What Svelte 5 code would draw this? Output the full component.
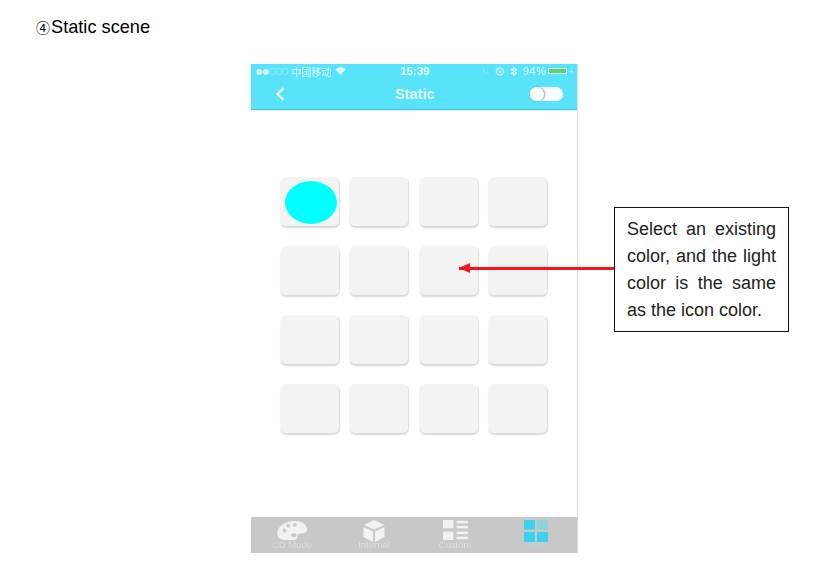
<script>
  const tiles = Array.from({ length: 16 }, (_, i) => i);
</script>

<main class="page">
  <h1 class="title"><span class="num">④</span>Static scene</h1>

  <div class="stage">
    <section class="phone">
      <header class="top">
        <div class="status">
          <span class="carrier"><span class="dots">●●○○○</span> 中国移动
            <svg width="11" height="8" viewBox="0 0 10 8"><path d="M0 2.6C3 -.6 7 -.6 10 2.6L5 8Z" fill="#dff8fd" /></svg>
          </span>
          <span class="time">15:39</span>
          <span class="right">
            <svg width="40" height="9" viewBox="0 0 36 8">
              <path d="M2 1C2 4 4 6 7 6" stroke="#8fe4f5" stroke-width="1.2" fill="none" />
              <circle cx="17" cy="4" r="3.2" fill="none" stroke="#cdf4fb" stroke-width="1.2" />
              <circle cx="17" cy="4" r="1.2" fill="#cdf4fb" />
              <path d="M29 0.5L32 2.5L27 6M29 7.500L32 5.500L27 2M29 .5V7.500" stroke="#e8fbff" stroke-width="1" fill="none" />
            </svg>
            <span class="pct">94%</span>
            <span class="battery"></span>
            <span class="plug">+</span>
          </span>
        </div>
        <div class="nav">
          <svg class="back" width="12" height="16" viewBox="0 0 12 16"><path d="M9.5 2L3.5 8L9.5 14" stroke="#f1fcff" stroke-width="2.4" fill="none" /></svg>
          <span class="heading">Static</span>
          <span class="toggle"><span class="knob"></span></span>
        </div>
      </header>

      <div class="grid">
        {#each tiles as t}
          <div class="tile">
            {#if t === 0}<span class="dot"></span>{/if}
          </div>
        {/each}
      </div>

      <footer class="tabs">
        <div class="tab">
          <svg width="32" height="23" viewBox="0 0 34 22">
            <path d="M2 17C-1 9 8 1 20 1C29 1 33 6 33 10C33 15 27 13 24 15C21 17 25 21 18 21C11 21 4 22 2 17Z" fill="#f2f2f2" />
            <circle cx="9" cy="11" r="2" fill="#c8c8c8" /><circle cx="13" cy="6" r="2" fill="#c8c8c8" />
            <circle cx="20" cy="5" r="2" fill="#c8c8c8" /><ellipse cx="19" cy="16" rx="3" ry="2" fill="#c8c8c8" />
          </svg>
          <span>CD Mode</span>
        </div>
        <div class="tab">
          <svg width="24" height="24" viewBox="0 0 24 24">
            <path d="M12 1L22 6L12 10.500L2 6Z" fill="#f2f2f2" />
            <path d="M1.500 8L11 12.500V23L1.500 18Z" fill="#f2f2f2" />
            <path d="M22.500 8L13 12.500V23L22.500 18Z" fill="#f2f2f2" />
          </svg>
          <span>Internal</span>
        </div>
        <div class="tab low">
          <svg width="25" height="20" viewBox="0 0 24 24" preserveAspectRatio="none" fill="#f2f2f2">
            <rect x="0" y="0" width="10" height="10" /><rect x="13" y="1" width="11" height="3" /><rect x="13" y="7" width="11" height="3" />
            <rect x="0" y="14" width="10" height="10" /><rect x="13" y="14" width="11" height="3" /><rect x="13" y="20" width="11" height="3" />
          </svg>
          <span>Custom</span>
        </div>
        <div class="tab low active">
          <svg width="24" height="22" viewBox="0 0 24 24" preserveAspectRatio="none">
            <rect x="0" y="0" width="11" height="10.500" fill="#3ad2f0" /><rect x="13" y="0" width="11" height="10.500" fill="#8fd0dd" />
            <rect x="0" y="13" width="11" height="11" fill="#3ad2f0" /><rect x="13" y="13" width="11" height="11" fill="#3ad2f0" />
          </svg>
          <span>Static</span>
        </div>
      </footer>
    </section>

    <!-- annotation on top of the screenshot -->
    <div class="arrow"></div>
    <aside class="callout">
      <p class="just">Select an existing</p>
      <p class="just">color, and the light</p>
      <p class="just">color is the same</p>
      <p>as the icon color.</p>
    </aside>
  </div>
</main>

<style>
  :global(body) {
    margin: 0;
    background: #fff;
  }

  .page {
    width: 833px;
    height: 569px;
    overflow: hidden;
    font-family: "Liberation Sans", Arial, sans-serif;
    color: #111;
  }

  .title {
    margin: 0;
    padding: 18px 0 0 36px;
    height: 27px;
    font-size: 18.2px;
    line-height: 19px;
    font-weight: normal;
    color: #000;
  }

  .num {
    font-family: "Noto Sans CJK SC", "DejaVu Sans", sans-serif;
    font-size: 14px;
    display: inline-block;
    width: 15px;
  }

  .stage {
    position: relative;
    padding: 19px 0 0 251px;
  }

  .phone {
    width: 326px;
    height: 489px;
    border-right: 1px solid #dcdcdc;
    display: flex;
    flex-direction: column;
    background: #fff;
    filter: blur(0.5px);
  }

  .top {
    height: 45px;
    background: #58e3fb;
    border-bottom: 1px solid #45bfd4;
    box-shadow: 0 1px 2px #d8eef2;
    color: #eefcff;
    flex: none;
  }

  .status {
    height: 14px;
    padding: 0 3px 0 5px;
    display: flex;
    align-items: center;
    justify-content: space-between;
    font-size: 10px;
    color: #d8f7fd;
  }

  .carrier {
    width: 115px;
    display: flex;
    align-items: center;
    gap: 3px;
    font-family: "Noto Sans CJK SC", sans-serif;
    white-space: nowrap;
  }

  .dots {
    font-size: 6.500px;
  }

  .time {
    font-weight: bold;
    font-size: 11.5px;
    color: #e8fbff;
  }

  .right {
    width: 115px;
    display: flex;
    align-items: center;
    justify-content: flex-end;
    gap: 2px;
  }

  .pct {
    font-size: 11px;
    letter-spacing: 0.4px;
  }

  .battery {
    height: 6px;
    background: #56d96a;
    border: 1px solid #dff8fd;
    box-sizing: border-box;
    width: 19px;
  }

  .plug {
    font-size: 8px;
  }

  .nav {
    height: 31px;
    padding: 0 14px 0 23px;
    display: flex;
    align-items: center;
    justify-content: space-between;
  }

  .heading {
    font-size: 14.500px;
    font-weight: bold;
    color: #e6fbff;
    margin-left: 14px;
  }

  .toggle {
    width: 33px;
    height: 14px;
    border-radius: 7px;
    background: #f8fdfe;
    display: block;
  }

  .knob {
    display: block;
    width: 14px;
    height: 14px;
    border-radius: 50%;
    background: #fff;
    box-shadow: 1px 0 2px #8d9a9d;
  }

  .grid {
    flex: 1;
    display: grid;
    grid-template-columns: repeat(4, 58px);
    grid-auto-rows: 49px;
    column-gap: 11.6px;
    row-gap: 20px;
    padding: 67px 0 0 29.500px;
    align-content: start;
  }

  .tile {
    position: relative;
    overflow: hidden;
    background: #f3f3f3;
    border-radius: 5px;
    box-shadow: 0 2px 2px #d8d8d8, 1px 1px 1px #e2e2e2;
    display: flex;
    align-items: center;
    justify-content: center;
  }

  /* faint glossy arc in the corner */
  .tile::before {
    content: "";
    position: absolute;
    left: 4px;
    top: 5px;
    width: 46px;
    height: 40px;
    border-radius: 50%;
    border-top: 1px solid #f6f6f6;
    border-left: 1px solid transparent;
    transform: rotate(-30deg);
  }

  .dot {
    position: relative;
    margin: 2px 0 0 3px;
    width: 52px;
    height: 43px;
    border-radius: 50%;
    background: #00ffff;
  }

  .tabs {
    height: 36px;
    background: #c8c8c8;
    display: grid;
    grid-template-columns: 82px 82px 80px 82px;
    flex: none;
  }

  .tab {
    position: relative;
    display: flex;
    flex-direction: column;
    align-items: center;
    padding-top: 2px;
    font-size: 9.500px;
    color: #dedede;
  }

  .tab.low {
    padding-top: 3px;
  }

  .tab span {
    position: absolute;
    bottom: 3px;
  }

  .tab.active span {
    color: #b9d4da;
  }

  .arrow {
    position: absolute;
    left: 459px;
    top: 221.500px;
    width: 155px;
    height: 3px;
    background: #f4141c;
  }

  .arrow::before {
    content: "";
    position: absolute;
    left: 0;
    top: -3.500px;
    border-style: solid;
    border-width: 5px 11px 5px 0;
    border-color: transparent #f4141c transparent transparent;
  }

  .callout {
    position: absolute;
    left: 614px;
    top: 162px;
    width: 175px;
    height: 125px;
    box-sizing: border-box;
    border: 1px solid #111;
    background: #fff;
    padding: 8px 12px 0;
    font-size: 18px;
    line-height: 27px;
    color: #222;
  }

  .callout p {
    margin: 0;
    white-space: nowrap;
  }

  .just {
    text-align: justify;
    text-align-last: justify;
  }
</style>
